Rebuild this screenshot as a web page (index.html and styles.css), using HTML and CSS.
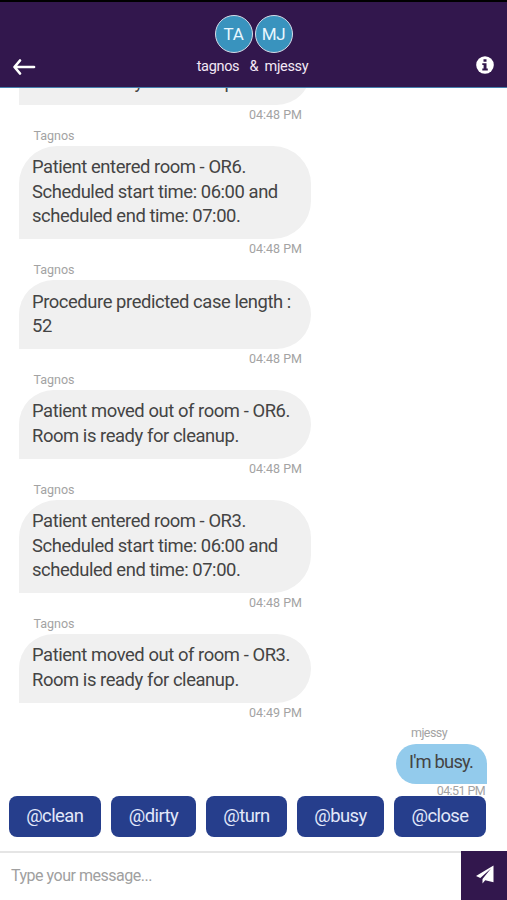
FILE: index.html
```html
<!DOCTYPE html>
<html lang="en">
<head>
<meta charset="utf-8">
<title>Chat</title>
<link rel="stylesheet" href="styles.css">
</head>
<body>
<header class="header">
  <svg class="back" viewBox="0 0 24 18"><path d="M8 2.500 2.500 9 8 15.500M3 9H22" fill="none" stroke="#fff" stroke-width="2.700" stroke-linecap="round" stroke-linejoin="round"/></svg>
  <div class="people">
    <div class="avatars"><span class="avatar">TA</span><span class="avatar">MJ</span></div>
    <div class="names">tagnos <span class="amp">&amp;</span> mjessy</div>
  </div>
  <svg class="info" viewBox="0 0 18 18"><circle cx="9" cy="9" r="8.800" fill="#fff"/><path d="M7.500 3.200h3v2.500h-3zM6.300 7.200h4.200v5.300h1.300v1.900H6.300v-1.900h1.300V9.100H6.300z" fill="#32174d"/></svg>
</header>
<main class="chat">
  <section class="msg"><div class="who">Tagnos</div><div class="bubble">Patient moved out of room - OR3.<br>Room is ready for cleanup.</div><div class="time">04:48 PM</div></section>
  <section class="msg"><div class="who">Tagnos</div><div class="bubble">Patient entered room - OR6.<br>Scheduled start time: 06:00 and<br>scheduled end time: 07:00.</div><div class="time">04:48 PM</div></section>
  <section class="msg"><div class="who">Tagnos</div><div class="bubble">Procedure predicted case length :<br>52</div><div class="time">04:48 PM</div></section>
  <section class="msg"><div class="who">Tagnos</div><div class="bubble">Patient moved out of room - OR6.<br>Room is ready for cleanup.</div><div class="time">04:48 PM</div></section>
  <section class="msg"><div class="who">Tagnos</div><div class="bubble">Patient entered room - OR3.<br>Scheduled start time: 06:00 and<br>scheduled end time: 07:00.</div><div class="time">04:48 PM</div></section>
  <section class="msg"><div class="who">Tagnos</div><div class="bubble">Patient moved out of room - OR3.<br>Room is ready for cleanup.</div><div class="time">04:49 PM</div></section>
  <section class="msg own"><div class="who">mjessy</div><div class="bubble">I'm busy.</div><div class="time">04:51 PM</div></section>
</main>
<nav class="chips">
  <button class="chip clean">@clean</button><button class="chip dirty">@dirty</button><button class="chip turn">@turn</button><button class="chip busy">@busy</button><button class="chip close">@close</button>
</nav>
<footer class="composer">
  <div class="field">Type your message...</div>
  <button class="send" aria-label="Send"><svg viewBox="0 0 18 19"><path d="M17.500.500 0 11l4.300 2L15 3.500 6.500 14v4.500l2.700-3.300 8.300 2.100z" fill="#fff"/></svg></button>
</footer>
</body>
</html>
```
FILE: styles.css
```css
* { box-sizing: border-box; }
body {
  margin: 0;
  height: 900px;
  display: flex;
  flex-direction: column;
  overflow: hidden;
  background: #fff;
  font-family: Roboto, "Liberation Sans", sans-serif;
  color: #444;
}
button { border: 0; padding: 0; font: inherit; }
.header {
  flex: none;
  height: 88px;
  display: grid;
  grid-template-columns: 1fr auto 1fr;
  background: #32174d;
  border-top: 2px solid #000;
  border-bottom: 1px solid #4580ae;
  color: #f3e8f5;
}
.back { width: 24px; height: 18px; margin: 56px 0 0 11.5px; }
.info { width: 18px; height: 18px; margin: 54px 13.5px 0 0; justify-self: end; }
.people { display: flex; flex-direction: column; align-items: center; }
.avatars { display: flex; gap: 2px; margin-top: 13px; }
.avatar {
  width: 38px;
  height: 38px;
  border: 1.5px solid #d5dce8;
  border-radius: 50%;
  background: #3993be;
  color: #e8f7ff;
  font-size: 17px;
  letter-spacing: -0.3px;
  line-height: 36px;
  text-align: center;
}
.names { margin: 4px 2px 0 0; font-size: 14.5px; line-height: 20px; letter-spacing: -0.32px; }
.amp { margin: 0 3px 0 7px; }
.chat {
  height: 708px;
  flex: none;
  display: flex;
  flex-direction: column;
  justify-content: flex-end;
  padding: 0 20px 0 18.5px;
  overflow: hidden;
}
.msg { flex: none; width: 292.5px; }
.who { height: 18px; padding-left: 15px; font-size: 12.5px; line-height: 15.5px; color: #a3a3a3; }
.bubble {
  padding: 9.6px 0 10.7px 13.5px;
  border-radius: 38px 38px 38px 0;
  background: #f0f0f0;
  font-size: 18.4px;
  letter-spacing: -0.43px;
  line-height: 24.3px;
  white-space: nowrap;
}
.time { height: 23px; padding-right: 9px; font-size: 12.5px; line-height: 19.2px; color: #a3a3a3; text-align: right; }
.own { width: 91px; align-self: flex-end; }
.own .bubble { padding: 6.5px 0 9px 13px; border-radius: 22px 22px 0 22px; background: #93cbec; letter-spacing: -0.8px; }
.own .who { line-height: 14px; letter-spacing: -0.55px; }
.own .time { height: 12.5px; padding-right: 2px; line-height: 14px; letter-spacing: -0.6px; }
.chips { flex: none; height: 55px; display: flex; gap: 10px; padding-left: 8.5px; }
.chip { height: 41px; padding-bottom: 2px; border-radius: 8px; background: #263e8c; color: #e2e8fa; font-size: 18.4px; letter-spacing: -0.55px; }
.clean { width: 92.5px; }
.dirty { width: 85px; }
.turn { width: 81px; }
.busy { width: 87px; }
.close { width: 92px; }
.composer { flex: 1; display: flex; }
.field { flex: 1; border-top: 2px solid #e5e5e5; padding-left: 11px; font-size: 16px; letter-spacing: -0.48px; line-height: 45px; color: #a0a0a0; }
.send { width: 46.5px; background: #32174d; display: flex; justify-content: center; align-items: center; }
.send svg { width: 18px; height: 19px; margin: 0 0 3px 2px; }
```
